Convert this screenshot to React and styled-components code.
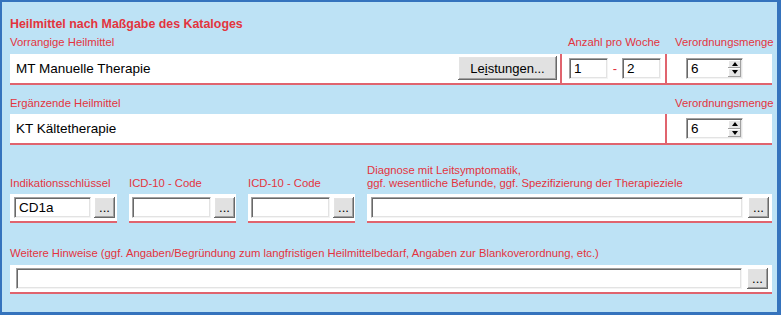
import React from 'react'
import styled, { createGlobalStyle } from 'styled-components'

const RED = '#e3343e'
const LINE = '#e0646e'

const GlobalStyle = createGlobalStyle`
  html, body {
    margin: 0;
    padding: 0;
  }
  body {
    font-family: "Liberation Sans", Arial, sans-serif;
  }
`

const Frame = styled.div`
  box-sizing: border-box;
  width: 781px;
  height: 315px;
  background: #bde2f5;
  border-style: solid;
  border-color: #3573bd;
  border-width: 2px 4px 3px 2px;
  padding: 14px 5px 0 8px;
`

const Title = styled.div`
  color: ${RED};
  font-size: 12.4px;
  font-weight: bold;
  line-height: 16px;
  white-space: nowrap;
`

const Section = styled.div`
  margin-top: ${p => p.$top}px;
`

const Label = styled.div`
  color: ${RED};
  font-size: 11.3px;
  line-height: 12.5px;
  white-space: nowrap;
  padding-left: ${p => p.$pl || 0}px;
`

const LabelGrid = styled.div`
  display: grid;
  grid-template-columns: ${p => p.$cols};
  column-gap: ${p => p.$gap || 0}px;
  align-items: end;
  margin-bottom: 5px;
`

const RowBox = styled.div`
  display: grid;
  grid-template-columns: 1fr 105px 107px;
  height: 29px;
  background: #fff;
  border-bottom: 2px solid ${LINE};
`

const Cell = styled.div`
  display: flex;
  align-items: center;
  box-sizing: border-box;
  padding-left: ${p => p.$pl || 0}px;
  padding-right: ${p => p.$pr || 0}px;
  border-left: ${p => (p.$sep ? `2px solid ${LINE}` : 'none')};
  gap: ${p => p.$gap || 0}px;
`

const Value = styled.div`
  flex: 1;
  font-size: 13.5px;
  color: #000;
  white-space: nowrap;
`

const Field = styled.div`
  box-sizing: border-box;
  height: 21px;
  width: ${p => (p.$w ? `${p.$w}px` : 'auto')};
  flex: ${p => (p.$w ? 'none' : 1)};
  min-width: 0;
  background: #fff;
  border-top: 1px solid #a0a0a0;
  border-left: 1px solid #a0a0a0;
  border-right: 1px solid #f4f4f4;
  border-bottom: 1px solid #f4f4f4;
  box-shadow: inset 1px 1px 0 #696969, inset -1px -1px 0 #e3e3e3;
  font-size: 13.5px;
  line-height: 19px;
  padding-left: 4px;
  color: #000;
  white-space: nowrap;
`

const SpinField = styled(Field)`
  display: flex;
  align-items: stretch;
  padding: 1px 1px 1px 4px;
  line-height: 17px;
`

const SpinText = styled.div`
  flex: 1;
`

const SpinButtons = styled.div`
  display: flex;
  flex-direction: column;
  width: 13px;
`

const SpinBtn = styled.div`
  flex: 1;
  background: #e6e6e6;
  box-shadow: inset -1px -1px 0 #a0a0a0, inset 1px 1px 0 #fff;
  display: flex;
  align-items: center;
  justify-content: center;
  &::after {
    content: '';
    width: 0;
    height: 0;
    border-left: 3.5px solid transparent;
    border-right: 3.5px solid transparent;
    ${p => (p.$down ? 'border-top: 4px solid #000;' : 'border-bottom: 4px solid #000;')}
  }
`

const Button = styled.button`
  box-sizing: border-box;
  flex: none;
  width: ${p => p.$w}px;
  height: ${p => p.$h}px;
  padding: 0;
  border: none;
  background: #e1e1e1;
  box-shadow: inset -1px -1px 0 #696969, inset 1px 1px 0 #ffffff,
    inset -2px -2px 0 #a0a0a0, inset 2px 2px 0 #e3e3e3;
  font-family: "Liberation Sans", Arial, sans-serif;
  font-size: 13px;
  color: #000;
  line-height: 1;
`

const Dash = styled.span`
  color: ${RED};
  font-size: 13px;
  width: 14px;
  text-align: center;
`

const BoxGrid = styled.div`
  display: grid;
  grid-template-columns: 107px 107px 107px 1fr;
  column-gap: 12px;
`

const SmallBox = styled.div`
  display: flex;
  align-items: center;
  height: 29px;
  box-sizing: border-box;
  padding: 0 ${p => p.$pr}px 0 ${p => p.$pl}px;
  gap: ${p => p.$gap}px;
  background: #fff;
  border-bottom: 2px solid ${LINE};
`

const Spin = ({ value }) => (
  <SpinField $w={57}>
    <SpinText>{value}</SpinText>
    <SpinButtons>
      <SpinBtn />
      <SpinBtn $down />
    </SpinButtons>
  </SpinField>
)

const Dots = () => (
  <Button $w={21} $h={21}>
    ...
  </Button>
)

export default function App() {
  return (
    <>
      <GlobalStyle />
      <Frame>
        <Title>Heilmittel nach Maßgabe des Kataloges</Title>

        <Section $top={4}>
          <LabelGrid $cols="1fr 105px 107px">
            <Label>Vorrangige Heilmittel</Label>
            <Label $pl={8}>Anzahl pro Woche</Label>
            <Label $pl={10}>Verordnungsmenge</Label>
          </LabelGrid>
          <RowBox>
            <Cell $pl={6} $pr={3}>
              <Value>MT Manuelle Therapie</Value>
              <Button $w={99} $h={24}>
                Le<u>i</u>stungen...
              </Button>
            </Cell>
            <Cell $sep $pl={7}>
              <Field $w={39}>1</Field>
              <Dash>-</Dash>
              <Field $w={39}>2</Field>
            </Cell>
            <Cell $sep $pl={19}>
              <Spin value="6" />
            </Cell>
          </RowBox>
        </Section>

        <Section $top={12}>
          <LabelGrid $cols="1fr 105px 107px">
            <Label>Ergänzende Heilmittel</Label>
            <Label />
            <Label $pl={10}>Verordnungsmenge</Label>
          </LabelGrid>
          <RowBox>
            <Cell $pl={6} style={{ gridColumn: 'span 2' }}>
              <Value>KT Kältetherapie</Value>
            </Cell>
            <Cell $sep $pl={19}>
              <Spin value="6" />
            </Cell>
          </RowBox>
        </Section>

        <Section $top={19}>
          <LabelGrid $cols="107px 107px 107px 1fr" $gap={12}>
            <Label>Indikationsschlüssel</Label>
            <Label>ICD-10 - Code</Label>
            <Label>ICD-10 - Code</Label>
            <Label>
              Diagnose mit Leitsymptomatik,
              <br />
              ggf. wesentliche Befunde, ggf. Spezifizierung der Therapieziele
            </Label>
          </LabelGrid>
          <BoxGrid>
            <SmallBox $pl={4} $pr={2} $gap={3}>
              <Field>CD1a</Field>
              <Dots />
            </SmallBox>
            <SmallBox $pl={3} $pr={1} $gap={3}>
              <Field />
              <Dots />
            </SmallBox>
            <SmallBox $pl={3} $pr={1} $gap={3}>
              <Field />
              <Dots />
            </SmallBox>
            <SmallBox $pl={4} $pr={3} $gap={5}>
              <Field />
              <Dots />
            </SmallBox>
          </BoxGrid>
        </Section>

        <Section $top={24}>
          <LabelGrid $cols="1fr">
            <Label>
              Weitere Hinweise (ggf. Angaben/Begründung zum langfristigen Heilmittelbedarf, Angaben zur
              Blankoverordnung, etc.)
            </Label>
          </LabelGrid>
          <SmallBox $pl={6} $pr={4} $gap={5}>
            <Field />
            <Dots />
          </SmallBox>
        </Section>
      </Frame>
    </>
  )
}
